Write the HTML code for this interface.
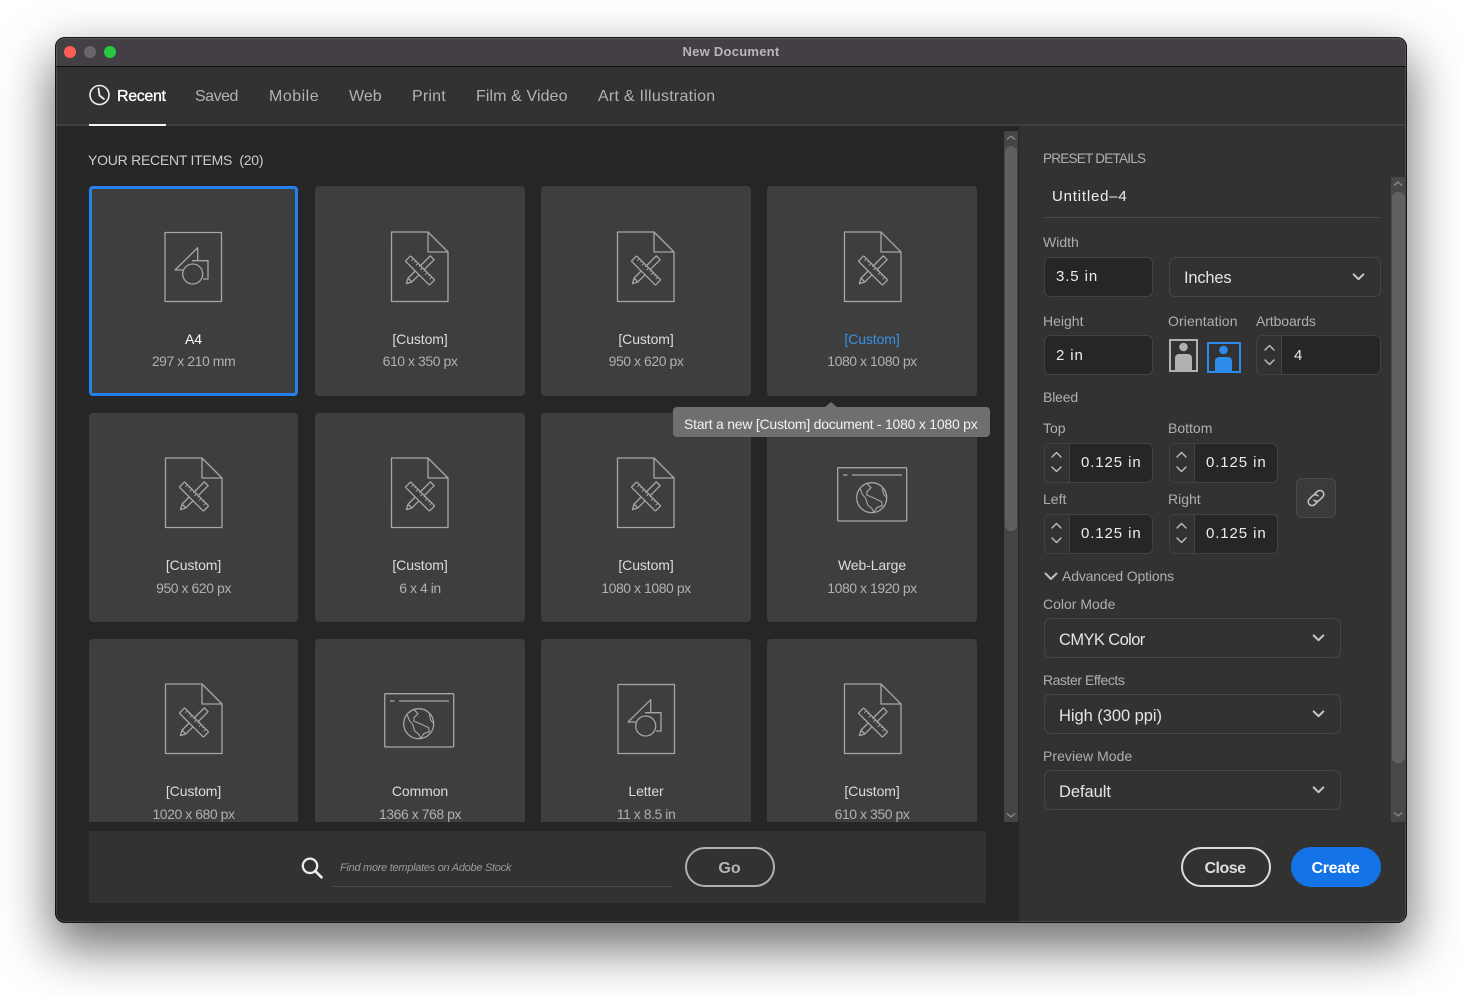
<!DOCTYPE html>
<html><head><meta charset="utf-8"><title>New Document</title>
<style>
*{box-sizing:border-box}
html,body{margin:0;padding:0;width:1462px;height:996px;background:#fff;overflow:hidden}
body{font-family:"Liberation Sans",sans-serif;position:relative}
#win{position:absolute;left:55px;top:37px;width:1352px;height:886px;border-radius:10px;box-shadow:0 22px 50px 4px rgba(0,0,0,.55)}
.a{position:absolute}
.t{position:absolute;white-space:nowrap;line-height:20px;height:20px}
.card{position:absolute;width:210px;height:210px;background:#3e3e3e;border-radius:4px;overflow:hidden}
.card svg{position:absolute;left:0;width:210px;height:210px}
.c1{width:209px}
.c4 svg{left:.5px}
.n,.s{position:absolute;left:0;width:100%;text-align:center;font-size:14px;line-height:20px;white-space:nowrap}
.n{color:#dcdcdc;top:143px;letter-spacing:-.1px}
.s{color:#b0b0b0;top:165px;letter-spacing:-.45px}
.r2{height:209px}
.r2 svg,.r3 svg{top:-1px}.r1 svg{top:0}
.r2 .n,.r3 .n{top:142px}
.tab{font-size:16px;color:#b2b2b2;top:87px}
.lb{font-size:14px;color:#afafaf}
.inp{position:absolute;background:#262626;border:1.5px solid #424242;border-radius:6px;height:40px}
.sel{position:absolute;background:#323232;border:1.5px solid #464646;border-radius:6px;height:40px}
.val{font-size:15px;color:#ececec;letter-spacing:.9px}
.sv{font-size:16.5px;color:#e4e4e4;letter-spacing:-.2px}
.step{position:absolute;left:0;top:0;bottom:0;width:25px;background:#323232;border-right:1.5px solid #424242;border-radius:5px 0 0 5px}
.ic{position:absolute;overflow:visible}
</style></head><body>
<svg width="0" height="0" style="position:absolute"><defs>
<symbol id="chev" viewBox="0 0 12 8"><path d="M1.2 1.4 6 6.2 10.8 1.4" fill="none" stroke="#c8c8c8" stroke-width="2" stroke-linecap="round" stroke-linejoin="round"/></symbol>
<symbol id="spin" viewBox="0 0 25 40"><path d="M8 15 12.5 10.5 17 15M8 25 12.5 29.5 17 25" fill="none" stroke="#c0c0c0" stroke-width="1.4" stroke-linecap="round" stroke-linejoin="round"/></symbol>
<symbol id="custom" viewBox="0 0 210 210"><g fill="none" stroke="#a6a6a6" stroke-width="1.3" stroke-linejoin="round">
<path d="M76.5 46H113L133 66V115.5H76.5ZM113 46V66H133"/>
<g transform="translate(104.5 84.5) rotate(-45)"><path d="M-18.5 0-13.5-2.7H18V2.7H-13.5ZM-13.5-2.7V2.7"/></g>
<g transform="translate(105 84.5) rotate(45)"><rect x="-17" y="-3.7" width="34" height="7.4" rx=".8" fill="#3e3e3e"/><path d="M-13-3.7v3M-9.75-3.7v1.8M-6.5-3.7v3M-3.25-3.7v1.8M0-3.7v3M3.25-3.7v1.8M6.5-3.7v3M9.75-3.7v1.8M13-3.7v3" stroke-width="1"/></g>
</g></symbol>
<symbol id="shape" viewBox="0 0 210 210"><g fill="none" stroke="#a6a6a6" stroke-width="1.3" stroke-linejoin="round">
<rect x="76" y="46.5" width="56.5" height="69"/>
<path d="M94 84H86L108.7 61.7V74.7M103 74.7H119V93H114"/>
<circle cx="103.7" cy="88" r="10"/>
</g></symbol>
<symbol id="web" viewBox="0 0 210 210"><g fill="none" stroke="#a6a6a6" stroke-width="1.3" stroke-linejoin="round">
<rect x="70.7" y="55.7" width="69" height="53.3" rx="1"/>
<path d="M76 63H80.5M85 63H135"/>
<circle cx="104.7" cy="85.7" r="15"/>
<path d="M100 71.7 104 75.7 100 79.7 99.7 83 106.3 85.7 114.7 89.7 115.3 93.7 109.7 95.7 107 100.3M93.3 77 95.3 82.3 98.7 86.3 100.7 93 104.7 96.3 107 100.3M115.3 76.3 116.7 82.3 120 85.7" stroke-width="1.1"/>
</g></symbol>
</defs></svg>

<div id="win"></div>
<!-- title bar -->
<div class="a" style="left:55px;top:37px;width:1352px;height:886px;border-radius:10px;overflow:hidden;background:#323232">
  <div class="a" style="left:0;top:0;width:1352px;height:29px;background:#433f44"></div>
  <div class="a" style="left:0;top:29px;width:1352px;height:1px;background:#0c0c0c"></div>
  <div class="a" style="left:9px;top:9px;width:12px;height:12px;border-radius:50%;background:#ff5f57"></div>
  <div class="a" style="left:29px;top:9px;width:12px;height:12px;border-radius:50%;background:#6a656b"></div>
  <div class="a" style="left:49px;top:9px;width:12px;height:12px;border-radius:50%;background:#28c840"></div>
  <div class="a" style="left:0;top:87px;width:1352px;height:2px;background:#3f3f3f"></div>
  <div class="a" style="left:0;top:89px;width:964px;height:797px;background:#262626"></div>
  <div class="a" style="left:964px;top:89px;width:388px;height:797px;background:#323232"></div>
  <div class="a" style="left:0;top:0;width:1352px;height:886px;border-radius:10px;border:1px solid #151515;box-shadow:inset 0 0 0 1px rgba(255,255,255,.12)"></div>
</div>
<div class="t" style="left:631px;width:200px;text-align:center;top:42px;font-size:13px;font-weight:bold;color:#b8b6b8;letter-spacing:.25px">New Document</div>

<!-- tabs -->
<svg class="ic" style="left:88px;top:84px" width="23" height="23" viewBox="0 0 23 23"><circle cx="11.5" cy="11" r="9.5" fill="none" stroke="#f0f0f0" stroke-width="1.6"/><path d="M10.5 4.5 11.5 11.5 16 15" fill="none" stroke="#f0f0f0" stroke-width="1.8" stroke-linecap="round" stroke-linejoin="round"/></svg>
<div class="t tab" style="left:117px;color:#fff;-webkit-text-stroke:.3px #fff;letter-spacing:-.35px">Recent</div>
<div class="t tab" style="left:195px;letter-spacing:-.5px">Saved</div>
<div class="t tab" style="left:269px;letter-spacing:.5px">Mobile</div>
<div class="t tab" style="left:349px">Web</div>
<div class="t tab" style="left:412px;letter-spacing:.2px">Print</div>
<div class="t tab" style="left:476px;letter-spacing:.1px">Film &amp; Video</div>
<div class="t tab" style="left:598px;letter-spacing:.25px">Art &amp; Illustration</div>
<div class="a" style="left:89px;top:124px;width:77px;height:2px;background:#f4f4f4"></div>

<div class="t" style="left:88px;top:150px;font-size:14px;color:#cdcdcd;letter-spacing:-.25px">YOUR RECENT ITEMS&nbsp; (20)</div>

<!-- grid clip -->
<div class="a" style="left:0;top:0;width:1000px;height:822px;overflow:hidden">
<div class="card r1 c1" style="left:89px;top:186px;box-shadow:inset 0 0 0 3px #2680eb"><svg><use href="#shape"/></svg><div class="n" style="color:#fff">A4</div><div class="s">297 x 210 mm</div></div>
<div class="card r1" style="left:315px;top:186px"><svg><use href="#custom"/></svg><div class="n">[Custom]</div><div class="s">610 x 350 px</div></div>
<div class="card r1" style="left:541px;top:186px"><svg><use href="#custom"/></svg><div class="n">[Custom]</div><div class="s">950 x 620 px</div></div>
<div class="card r1 c4" style="left:767px;top:186px"><svg><use href="#custom"/></svg><div class="n" style="color:#3a8fe8">[Custom]</div><div class="s">1080 x 1080 px</div></div>

<div class="card r2 c1" style="left:89px;top:413px"><svg><use href="#custom"/></svg><div class="n">[Custom]</div><div class="s">950 x 620 px</div></div>
<div class="card r2" style="left:315px;top:413px"><svg><use href="#custom"/></svg><div class="n">[Custom]</div><div class="s">6 x 4 in</div></div>
<div class="card r2" style="left:541px;top:413px"><svg><use href="#custom"/></svg><div class="n">[Custom]</div><div class="s">1080 x 1080 px</div></div>
<div class="card r2" style="left:767px;top:413px"><svg><use href="#web"/></svg><div class="n">Web-Large</div><div class="s">1080 x 1920 px</div></div>

<div class="card r3 c1" style="left:89px;top:639px"><svg><use href="#custom"/></svg><div class="n">[Custom]</div><div class="s">1020 x 680 px</div></div>
<div class="card r3" style="left:315px;top:639px"><svg style="left:-1px"><use href="#web"/></svg><div class="n">Common</div><div class="s">1366 x 768 px</div></div>
<div class="card r3" style="left:541px;top:639px"><svg style="left:.5px"><use href="#shape"/></svg><div class="n">Letter</div><div class="s">11 x 8.5 in</div></div>
<div class="card r3 c4" style="left:767px;top:639px"><svg><use href="#custom"/></svg><div class="n">[Custom]</div><div class="s">610 x 350 px</div></div>
</div>

<!-- tooltip -->
<div class="a" style="left:825px;top:402px;width:0;height:0;border-left:6px solid transparent;border-right:6px solid transparent;border-bottom:5px solid #6f6f6f"></div>
<div class="a" style="left:672.5px;top:407px;width:317px;height:30px;background:#6f6f6f;border-radius:4px"></div>
<div class="t" style="left:684px;top:414px;font-size:14px;color:#f2f2f2;letter-spacing:-.235px">Start a new [Custom] document - 1080 x 1080 px</div>

<!-- left scrollbar -->
<div class="a" style="left:1004px;top:131px;width:14px;height:691px;background:#454545"></div>
<div class="a" style="left:1005px;top:146px;width:12px;height:385px;background:#5f5f5f;border-radius:6px"></div>
<svg class="ic" style="left:1005px;top:134px" width="12" height="8" viewBox="0 0 12 8"><path d="M2 5.5 6 2 10 5.5" fill="none" stroke="#8c8c8c" stroke-width="1.2"/></svg>
<svg class="ic" style="left:1005px;top:811px" width="12" height="8" viewBox="0 0 12 8"><path d="M2 2.5 6 6 10 2.5" fill="none" stroke="#8c8c8c" stroke-width="1.2"/></svg>

<!-- search bar -->
<div class="a" style="left:89px;top:831px;width:897px;height:72px;background:#323232"></div>
<svg class="ic" style="left:298px;top:854px" width="28" height="28" viewBox="0 0 28 28"><circle cx="12" cy="11.8" r="7.2" fill="none" stroke="#ececec" stroke-width="2.3"/><path d="M17.5 17.3 23.5 23.3" stroke="#ececec" stroke-width="2.7" stroke-linecap="round"/></svg>
<div class="t" style="left:340px;top:858px;font-size:11px;font-style:italic;color:#9a9a9a;letter-spacing:-.28px">Find more templates on Adobe Stock</div>
<div class="a" style="left:332px;top:886px;width:340px;height:1px;background:#4c4c4c"></div>
<div class="a" style="left:685px;top:847px;width:90px;height:40px;border:2px solid #b0b0b0;border-radius:20px"></div>
<div class="t" style="left:684.5px;width:90px;text-align:center;top:859px;font-size:16px;font-weight:bold;color:#b6b6b6">Go</div>

<!-- right panel -->
<div class="t" style="left:1043px;top:149px;font-size:13.5px;color:#b0b0b0;letter-spacing:-.75px">PRESET DETAILS</div>
<div class="t" style="left:1052px;top:187px;font-size:15px;color:#eeeeee;letter-spacing:.8px">Untitled–4</div>
<div class="a" style="left:1044px;top:217px;width:336px;height:1px;background:#484848"></div>

<div class="a" style="left:1391px;top:177px;width:15px;height:645px;background:#484848"></div>
<div class="a" style="left:1392px;top:192px;width:13px;height:571px;background:#606060;border-radius:6px"></div>
<svg class="ic" style="left:1392px;top:180px" width="12" height="8" viewBox="0 0 12 8"><path d="M2 5.5 6 2 10 5.5" fill="none" stroke="#8c8c8c" stroke-width="1.2"/></svg>
<svg class="ic" style="left:1392px;top:810px" width="12" height="8" viewBox="0 0 12 8"><path d="M2 2.5 6 6 10 2.5" fill="none" stroke="#8c8c8c" stroke-width="1.2"/></svg>

<div class="t lb" style="left:1043px;top:232px">Width</div>
<div class="inp" style="left:1043.5px;top:257px;width:109.5px"></div>
<div class="t val" style="left:1056px;top:266.5px">3.5 in</div>
<div class="sel" style="left:1168.5px;top:257px;width:212.5px"></div>
<div class="t sv" style="left:1184px;top:268px">Inches</div>
<svg class="ic" style="left:1352px;top:273px" width="13" height="8"><use href="#chev"/></svg>

<div class="t lb" style="left:1043px;top:311px">Height</div>
<div class="t lb" style="left:1168px;top:311px;letter-spacing:.1px">Orientation</div>
<div class="t lb" style="left:1256px;top:311px;letter-spacing:-.1px">Artboards</div>
<div class="inp" style="left:1043.5px;top:335px;width:109.5px"></div>
<div class="t val" style="left:1056px;top:346px">2 in</div>

<svg class="ic" style="left:1168px;top:338px" width="74" height="36" viewBox="0 0 74 36">
<rect x="2" y="2" width="27" height="31" fill="none" stroke="#b0b0b0" stroke-width="2"/>
<circle cx="15.5" cy="9" r="4.3" fill="#b0b0b0"/><path d="M7 20a4 4 0 0 1 4-4h9a4 4 0 0 1 4 4V33H7Z" fill="#b0b0b0"/>
<rect x="40" y="5" width="32" height="29" fill="none" stroke="#2d8ceb" stroke-width="2"/>
<circle cx="55.5" cy="12" r="4.3" fill="#2d8ceb"/><path d="M47 23a4 4 0 0 1 4-4h9a4 4 0 0 1 4 4V33H47Z" fill="#2d8ceb"/>
</svg>

<div class="inp" style="left:1256px;top:335px;width:125px"><div class="step"></div></div>
<svg class="ic" style="left:1257px;top:335px" width="25" height="40"><use href="#spin"/></svg>
<div class="t val" style="left:1294px;top:346px">4</div>

<div class="t lb" style="left:1043px;top:387px;letter-spacing:-.15px">Bleed</div>
<div class="t lb" style="left:1043px;top:418px">Top</div>
<div class="t lb" style="left:1168px;top:418px">Bottom</div>
<div class="inp" style="left:1043.5px;top:442.5px;width:109.5px"><div class="step"></div></div>
<svg class="ic" style="left:1044px;top:442px" width="25" height="40"><use href="#spin"/></svg>
<div class="t val" style="left:1081px;top:453px">0.125 in</div>
<div class="inp" style="left:1168.5px;top:442.5px;width:109.5px"><div class="step"></div></div>
<svg class="ic" style="left:1169px;top:442px" width="25" height="40"><use href="#spin"/></svg>
<div class="t val" style="left:1206px;top:453px">0.125 in</div>

<div class="t lb" style="left:1043px;top:489px">Left</div>
<div class="t lb" style="left:1168px;top:489px">Right</div>
<div class="inp" style="left:1043.5px;top:513.5px;width:109.5px"><div class="step"></div></div>
<svg class="ic" style="left:1044px;top:513px" width="25" height="40"><use href="#spin"/></svg>
<div class="t val" style="left:1081px;top:524px">0.125 in</div>
<div class="inp" style="left:1168.5px;top:513.5px;width:109.5px"><div class="step"></div></div>
<svg class="ic" style="left:1169px;top:513px" width="25" height="40"><use href="#spin"/></svg>
<div class="t val" style="left:1206px;top:524px">0.125 in</div>

<div class="a" style="left:1296px;top:478px;width:40px;height:40px;background:#3b3b3b;border:1.5px solid #4a4a4a;border-radius:6px"></div>
<svg class="ic" style="left:1304px;top:486px" width="24" height="24" viewBox="0 0 24 24"><g fill="none" stroke="#c0c0c0" stroke-width="1.6" stroke-linecap="round"><path d="M10.5 8.2 13.2 5.5a4 4 0 0 1 5.5 0 4 4 0 0 1 0 5.5L15.5 14.2a4 4 0 0 1-5.5 0"/><path d="M13.5 15.8 10.8 18.5a4 4 0 0 1-5.5 0 4 4 0 0 1 0-5.5L8.5 9.8a4 4 0 0 1 5.5 0"/></g></svg>

<svg class="ic" style="left:1044px;top:572px" width="14" height="9" viewBox="0 0 14 9"><path d="M1.5 1.5 7 7 12.5 1.5" fill="none" stroke="#c0c0c0" stroke-width="2" stroke-linecap="round" stroke-linejoin="round"/></svg>
<div class="t lb" style="left:1062px;top:566px;letter-spacing:-.15px">Advanced Options</div>

<div class="t lb" style="left:1043px;top:594px">Color Mode</div>
<div class="sel" style="left:1043.5px;top:618px;width:297.5px"></div>
<div class="t sv" style="left:1059px;top:630px;letter-spacing:-.6px">CMYK Color</div>
<svg class="ic" style="left:1312px;top:634px" width="13" height="8"><use href="#chev"/></svg>

<div class="t lb" style="left:1043px;top:670px;letter-spacing:-.45px">Raster Effects</div>
<div class="sel" style="left:1043.5px;top:694px;width:297.5px"></div>
<div class="t sv" style="left:1059px;top:706px;letter-spacing:-.05px">High (300 ppi)</div>
<svg class="ic" style="left:1312px;top:710px" width="13" height="8"><use href="#chev"/></svg>

<div class="t lb" style="left:1043px;top:746px;letter-spacing:.05px">Preview Mode</div>
<div class="sel" style="left:1043.5px;top:770px;width:297.5px"></div>
<div class="t sv" style="left:1059px;top:782px;letter-spacing:-.05px">Default</div>
<svg class="ic" style="left:1312px;top:786px" width="13" height="8"><use href="#chev"/></svg>

<div class="a" style="left:1181px;top:847px;width:90px;height:40px;border:2px solid #dcdcdc;border-radius:20px"></div>
<div class="t" style="left:1181px;width:88px;text-align:center;top:859px;font-size:16px;font-weight:bold;color:#dedede;letter-spacing:-.5px">Close</div>
<div class="a" style="left:1291px;top:847px;width:90px;height:40px;background:#1473e6;border-radius:20px"></div>
<div class="t" style="left:1291px;width:89px;text-align:center;top:859px;font-size:16px;font-weight:bold;color:#fff;letter-spacing:-.3px">Create</div>
</body></html>
